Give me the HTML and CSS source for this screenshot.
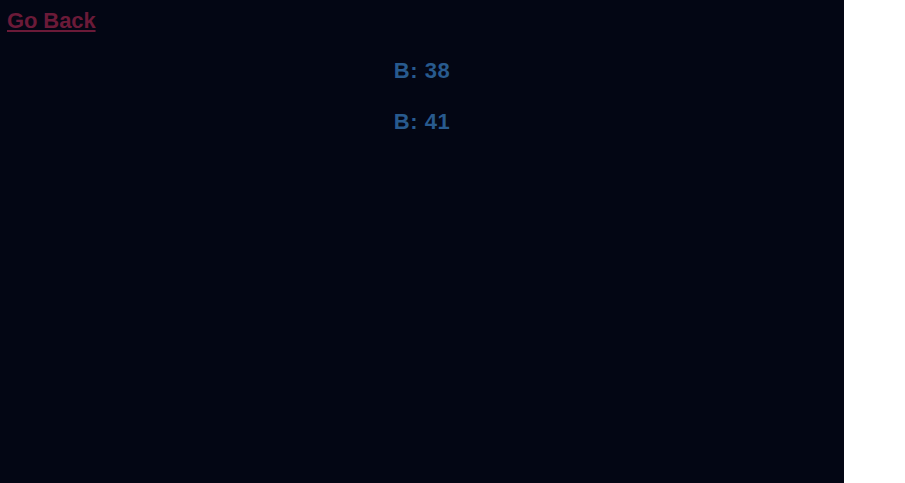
FILE: index.html
```html
<!DOCTYPE html>
<html>
<head>
<meta charset="utf-8">
<link rel="stylesheet" href="styles.css">
</head>
<body>
<div class="app">
  <a class="back" href="#">Go Back</a>
  <div class="list">
    <p class="item">B: 38</p>
    <p class="item">B: 41</p>
  </div>
</div>
</body>
</html>
```
FILE: styles.css
```css
html, body {
  margin: 0;
  padding: 0;
  background: #ffffff;
}
.app {
  width: 844px;
  height: 483px;
  background: #030614;
  box-sizing: border-box;
  padding: 8px 7px;
  font-family: "Liberation Sans", Arial, sans-serif;
}
.back {
  display: inline-block;
  color: #6b1a38;
  font-weight: bold;
  font-size: 22px;
  line-height: 26px;
  letter-spacing: -0.1px;
  text-decoration: underline;
}
.list {
  display: flex;
  flex-direction: column;
  align-items: center;
  gap: 26px;
  margin-top: 24px;
}
.item {
  margin: 0;
  color: #285a8e;
  font-weight: bold;
  font-size: 22px;
  line-height: 25px;
  letter-spacing: 0.5px;
}
```
